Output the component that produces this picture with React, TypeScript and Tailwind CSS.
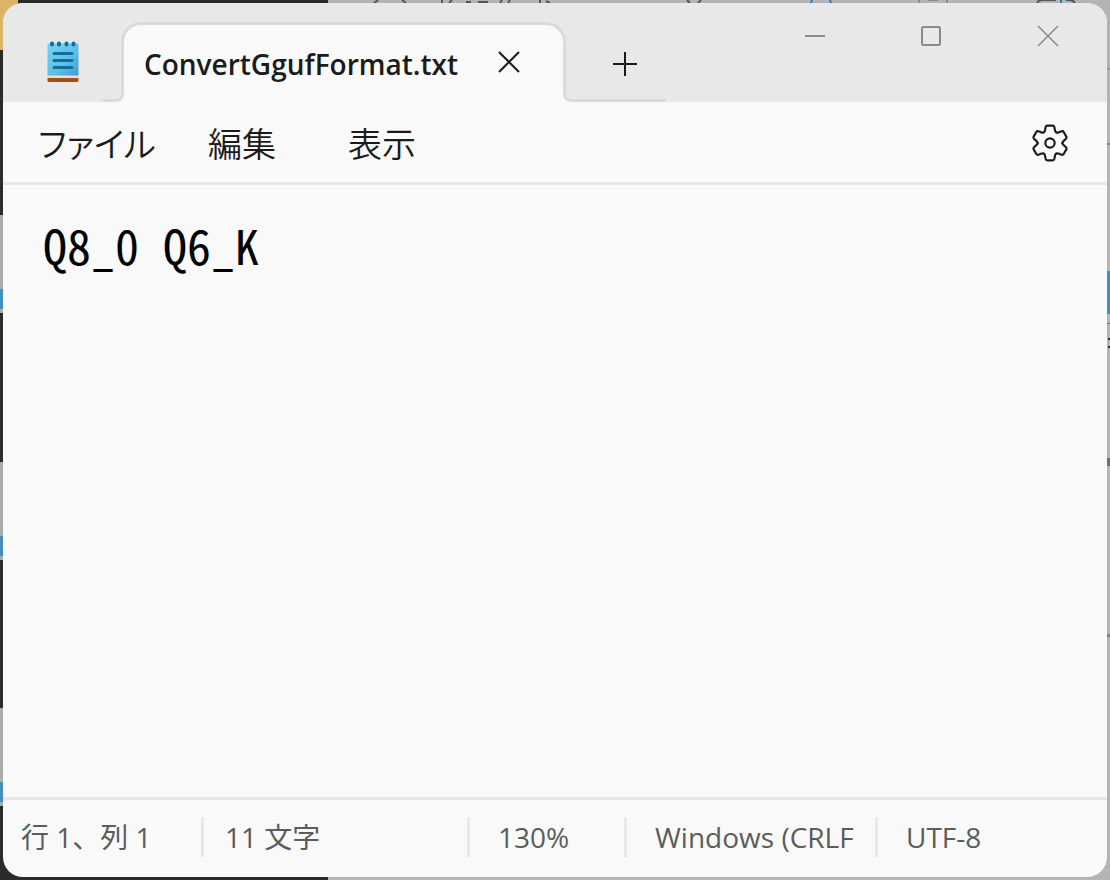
import { useState } from "react";

const MENUS = ["ファイル", "編集", "表示"];

function NotepadIcon() {
  return (
    <svg className="h-[42px] w-8" viewBox="0 0 32 42" aria-hidden="true">
      <defs>
        <linearGradient id="paper" x1="0" y1="0" x2="1" y2="1">
          <stop offset="0" stopColor="#78d2f4" />
          <stop offset="0.6" stopColor="#5cbfe4" />
          <stop offset="1" stopColor="#3c9bcc" />
        </linearGradient>
      </defs>
      <path d="M0.500 4q0-1.500 1.500-1.500h28q1.500 0 1.500 1.500v31h-31z" fill="url(#paper)" />
      <path d="M0.500 34.500h31v3h-31z" fill="#e4e0dc" />
      <path d="M0.500 37h31v2.500q0 1.500-1.500 1.500h-28q-1.500 0-1.500-1.500z" fill="#a5500c" />
      <g stroke="#0f6e9f" strokeWidth="3" strokeLinecap="round">
        <path d="M7 12.500h18M7 19.500h18M7 26.500h18" />
        <path d="M5 2.500v1M12 2.500v1M19.500 2.500v1M26.500 2.500v1" strokeWidth="4" />
      </g>
    </svg>
  );
}

function CrossIcon({ width = 2 }: { width?: number }) {
  return (
    <svg className="size-[22px]" viewBox="0 0 22 22" aria-hidden="true">
      <path
        d="M1 1l20 20M21 1L1 21"
        stroke="currentColor"
        strokeWidth={width}
        fill="none"
      />
    </svg>
  );
}

function GearIcon() {
  return (
    <svg
      className="size-10"
      viewBox="-60 -60 120 120"
      fill="none"
      stroke="currentColor"
      strokeWidth="6.500"
      strokeLinecap="round"
      aria-hidden="true"
    >
      {[0, 60, 120, 180, 240, 300].map((angle) => (
        <path
          key={angle}
          transform={`rotate(${angle})`}
          d="M-18.500 -32C-14.500 -34.300 -15 -38 -14 -43L-13 -48Q-12 -52 -8 -52H8Q12 -52 13 -48L14 -43C15 -38 14.500 -34.300 18.500 -32"
        />
      ))}
      <circle r="14" />
    </svg>
  );
}

// What shows of the desktop around the window edges
function Backdrop() {
  return (
    <div className="absolute inset-0 -z-10 flex bg-[#b4b4b4]" aria-hidden="true">
      <div className="w-[328px] bg-[#2b2b2b]">
        <div className="h-[50px] w-[18px] bg-[#dcb468]" />
        <div className="mt-[165px] flex h-[98px] w-[3px] flex-col justify-end bg-[#acacac] pb-1">
          <div className="h-5 bg-[#428fbd]" />
        </div>
        <div className="mt-[149px] flex h-[98px] w-[3px] flex-col justify-end bg-[#acacac] pb-1">
          <div className="h-5 bg-[#428fbd]" />
        </div>
        <div className="mt-[148px] flex h-[98px] w-[3px] flex-col justify-end bg-[#acacac] pb-1">
          <div className="h-5 bg-[#428fbd]" />
        </div>
      </div>
      <div className="flex flex-1 flex-col items-end">
        <svg className="h-[3px] w-full" viewBox="0 0 782 3" preserveAspectRatio="xMinYMin slice">
          <g fill="none" strokeWidth="2">
            <path
              d="M50 0l-4 3M74 0l4 3M114 0v3M124 0l-3 3M138 2h5M150 2h10M174 0l-2 3M182 0l-2 3M212 0v3M218 1l4 2M359 0l3 3M373 0l-3 3"
              stroke="#555555"
            />
            <path d="M591 0v3M600 0h10M619 0v3" stroke="#8c8c8c" />
            <path d="M484 0l-1 3M502 0l1 3M733 0v3" stroke="#1f7fb8" />
            <path d="M709 3q2-3 5-3h14M738 0h3q4 0 6 3" stroke="#555555" />
          </g>
        </svg>
        <div className="mt-[65px] h-[2px] w-[3px] bg-[#999999]" />
        <div className="mt-[73px] h-[2px] w-[3px] bg-[#808080]" />
        <div className="mt-[126px] h-[43px] w-[3px] bg-[#428fbd]" />
        <div className="mt-[9px] h-px w-[3px] bg-[#707070]" />
        <div className="mt-[14px] h-[2px] w-[2px] bg-[#22304a]" />
        <div className="mt-[6px] h-[2px] w-[2px] bg-[#22304a]" />
        <div className="mt-[110px] h-2 w-[3px] bg-[#707070]" />
        <div className="mt-[168px] h-[3px] w-[3px] bg-[#808080]" />
      </div>
    </div>
  );
}

function TitleBar() {
  return (
    <header className="flex h-[99px] bg-[#e8e8e8]">
      <div className="w-[118px] shrink-0 pt-[38px] pl-11">
        <NotepadIcon />
      </div>

      <div className="relative flex h-20 w-[445px] items-center justify-between self-end rounded-t-[20px] border-x-3 border-t-3 border-[#dadada] bg-[#f9f9f9] pr-[35px] pl-5">
        {/* shoulders that run the tab outline into the toolbar */}
        <span className="absolute bottom-0 -left-[21px] h-3 w-[21px] bg-[#f9f9f9]">
          <span className="block h-full rounded-br-lg border-r-3 border-b-3 border-[#dadada] bg-[#e8e8e8]" />
        </span>
        <span className="absolute -right-[103px] bottom-0 h-3 w-[103px] bg-[#f9f9f9]">
          <span className="block h-full rounded-bl-lg border-b-3 border-l-3 border-[#dadada] bg-[#e8e8e8]" />
        </span>
        <button className="font-['Open_Sans',sans-serif] text-[28px] font-semibold whitespace-nowrap">
          ConvertGgufFormat.txt
        </button>
        <button className="mb-1 p-2" aria-label="タブを閉じる">
          <CrossIcon />
        </button>
      </div>

      <button
        className="ml-7 flex h-[76px] w-[62px] items-center justify-center self-end"
        aria-label="新しいタブ"
      >
        <svg className="size-6" viewBox="0 0 24 24" aria-hidden="true">
          <path d="M12 0v24M0 12h24" stroke="currentColor" strokeWidth="2" />
        </svg>
      </button>

      <div className="ml-auto flex h-[66px] text-[#8a8a8a]">
        <button className="flex w-[116px] items-center justify-center" aria-label="最小化">
          <svg className="h-[2px] w-5" viewBox="0 0 20 2" aria-hidden="true">
            <path d="M0 1h20" stroke="currentColor" strokeWidth="2" />
          </svg>
        </button>
        <button className="flex w-[116px] items-center justify-center" aria-label="最大化">
          <svg className="size-5" viewBox="0 0 20 20" fill="none" aria-hidden="true">
            <rect x="1" y="1" width="18" height="18" rx="1.500" stroke="currentColor" strokeWidth="2" />
          </svg>
        </button>
        <button className="flex w-[118px] items-center justify-center" aria-label="閉じる">
          <CrossIcon width={1.5} />
        </button>
      </div>
    </header>
  );
}

export default function App() {
  const [text, setText] = useState("Q8_0 Q6_K");

  return (
    <div className="relative isolate flex min-h-screen flex-col overflow-hidden p-[3px] text-[#1b1b1b]">
      <Backdrop />

      <div className="flex flex-1 flex-col overflow-hidden rounded-[20px] bg-[#f9f9f9]">
        <TitleBar />

        <nav className="flex h-[83px] items-center border-b-3 border-[#e8e8e8] pt-[2px] pr-[37px] pl-[35px]">
          <div className="grid grid-cols-[170px_140px_auto] font-['Noto_Sans_CJK_JP',sans-serif] text-[34px] leading-10 font-[350] [font-feature-settings:'palt']">
            {MENUS.map((menu) => (
              <button key={menu} className="text-left">
                {menu}
              </button>
            ))}
          </div>
          <button className="ml-auto" aria-label="設定">
            <GearIcon />
          </button>
        </nav>

        <textarea
          className="w-full flex-1 resize-none bg-transparent px-10 pt-[35px] font-['Noto_Sans_CJK_JP',monospace] text-5xl text-black outline-none [font-feature-settings:'hwid']"
          aria-label="テキスト エディター"
          spellCheck={false}
          value={text}
          onChange={(e) => setText(e.target.value)}
        />

        <footer className="flex h-20 items-center border-t-3 border-[#e8e8e8] pb-[3px] font-['Open_Sans','Noto_Sans_CJK_JP',sans-serif] text-[28px] leading-10 whitespace-nowrap text-[#5c5c5c]">
          <span className="w-[198px] pl-[18px]">行 1、列 1</span>
          <span className="flex-1 border-l-3 border-[#e8e8e8] pl-[21px]">11 文字</span>
          <span className="w-[157px] border-l-3 border-[#e8e8e8] pl-7">130%</span>
          <span className="w-[251px] overflow-hidden border-l-3 border-[#e8e8e8] pl-7">
            Windows (CRLF
          </span>
          <span className="w-[232px] border-l-3 border-[#e8e8e8] pl-7">UTF-8</span>
        </footer>
      </div>
    </div>
  );
}
